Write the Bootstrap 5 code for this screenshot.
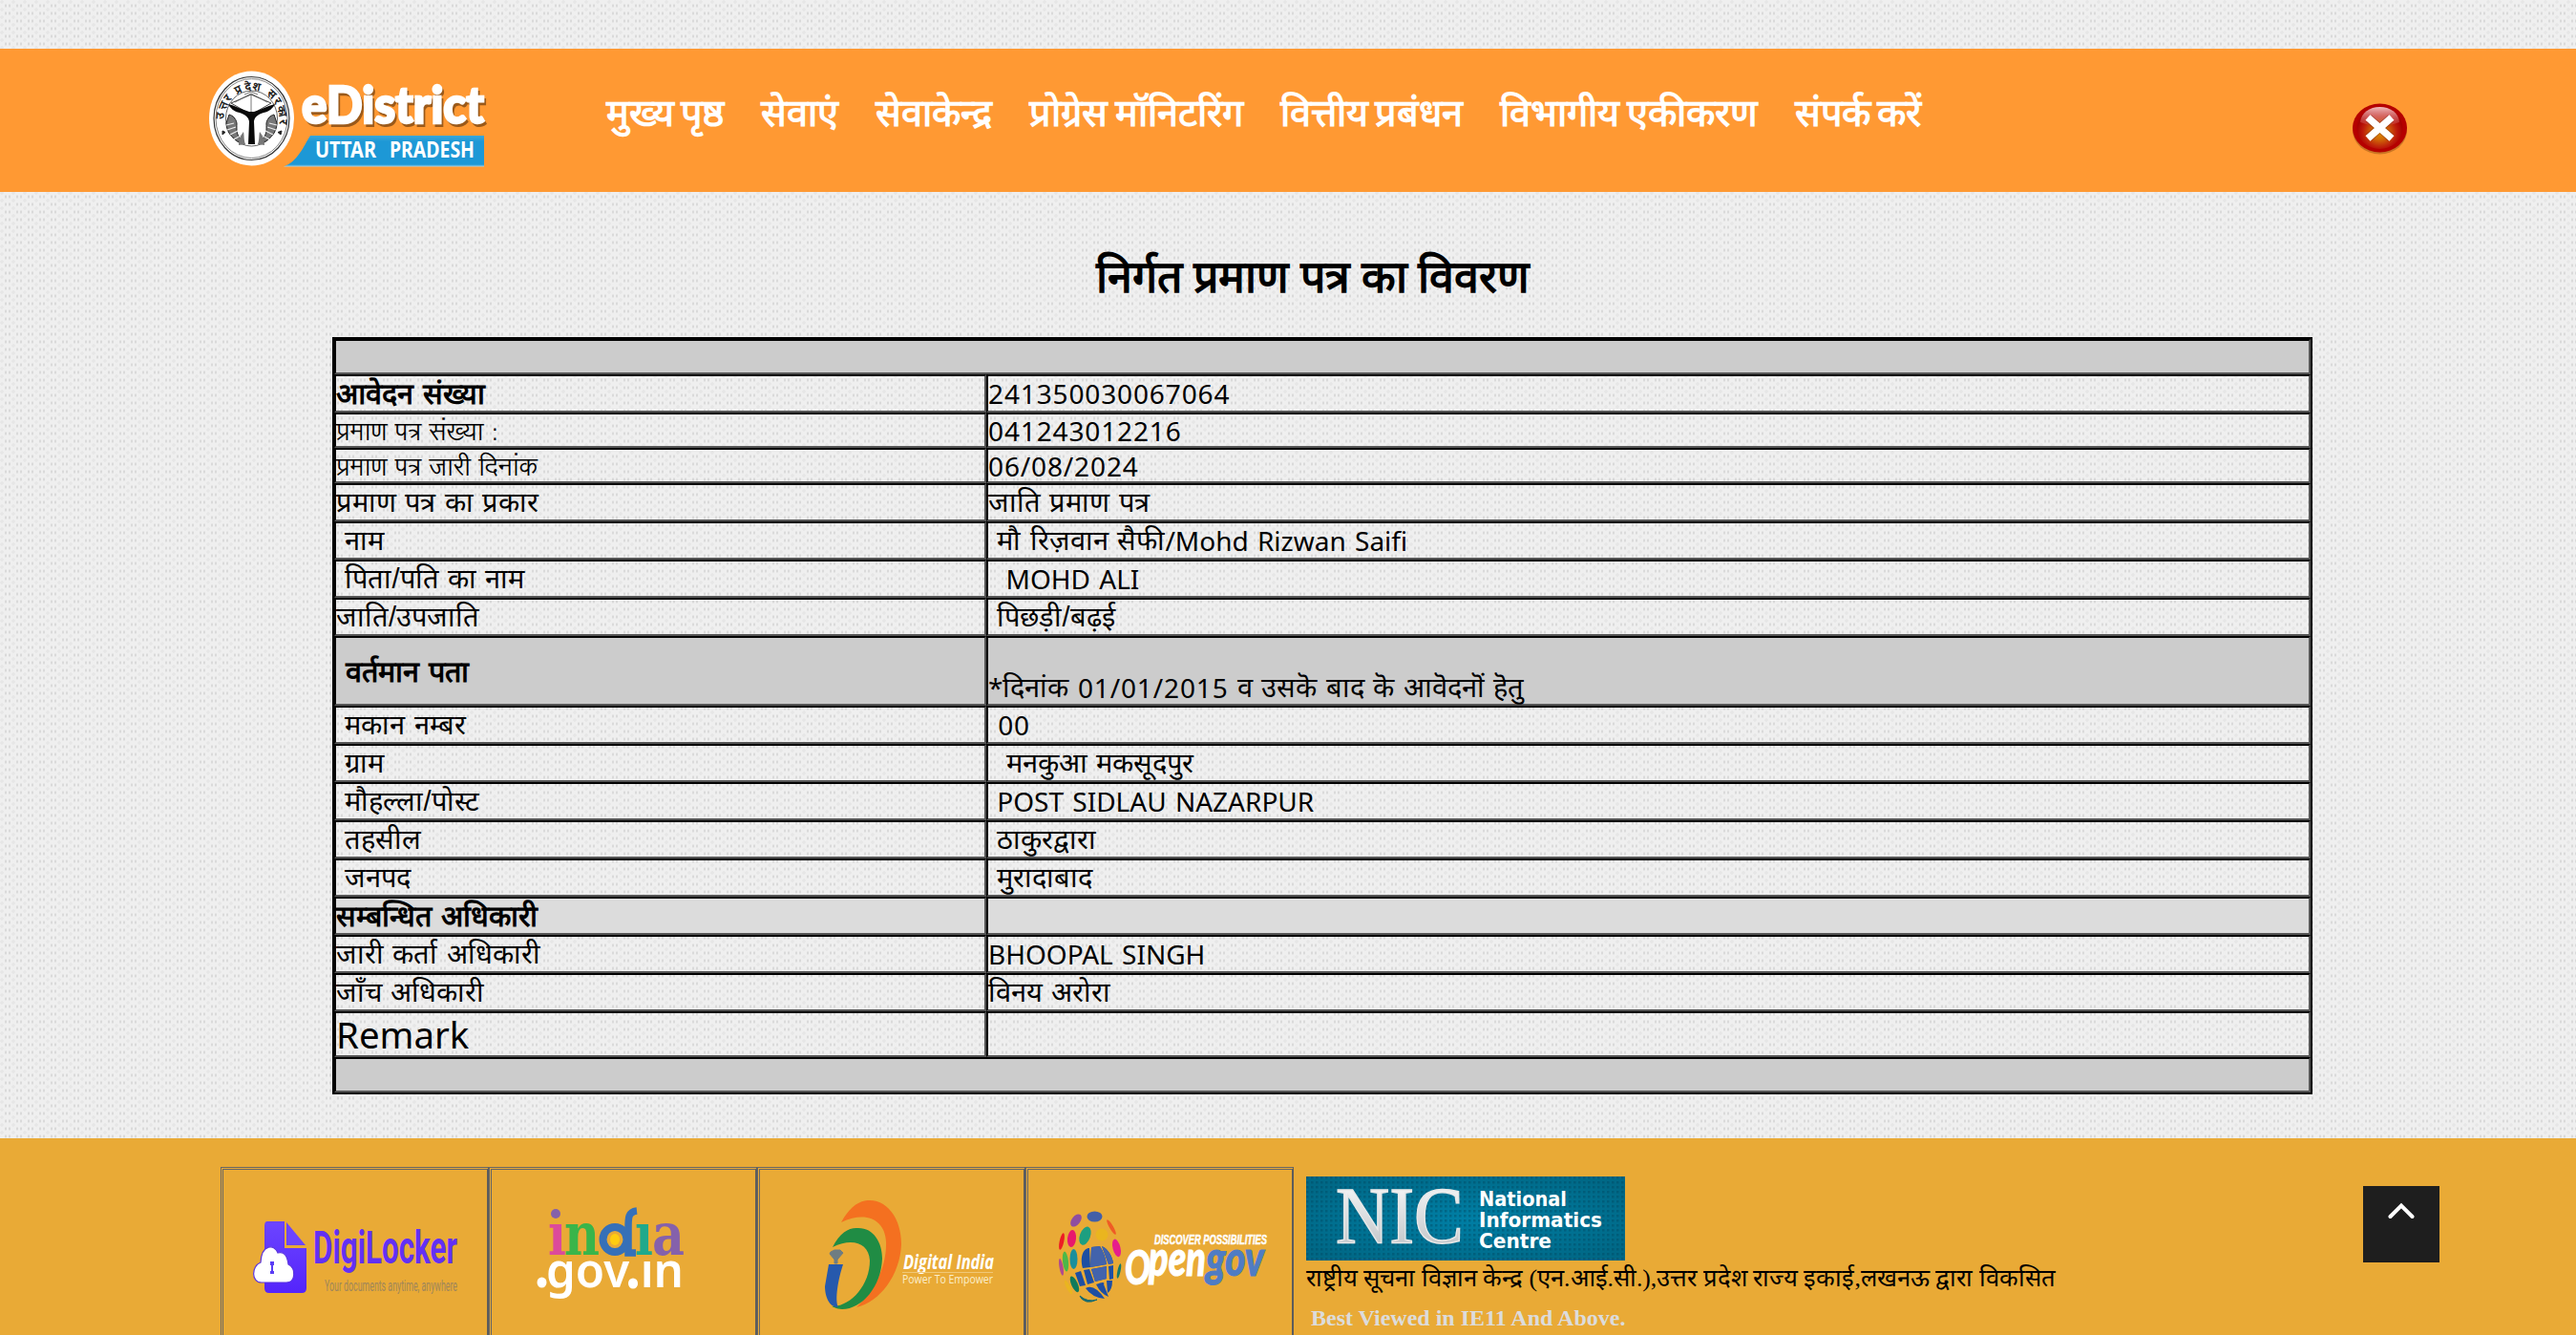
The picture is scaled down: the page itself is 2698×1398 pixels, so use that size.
<!DOCTYPE html>
<html lang="hi">
<head>
<meta charset="utf-8">
<meta name="viewport" content="width=device-width, initial-scale=1">
<title>eDistrict Uttar Pradesh</title>
<link href="https://cdn.jsdelivr.net/npm/bootstrap@5.3.0/dist/css/bootstrap.min.css" rel="stylesheet">
<style>
body{margin:0;height:1398px;overflow:hidden;color:#000;font-family:"Liberation Sans",sans-serif;background-color:#efefef;
 background-image:radial-gradient(ellipse 1.5px 2px,#dadada 60%,transparent),radial-gradient(ellipse 1.5px 2px,#dadada 60%,transparent),radial-gradient(ellipse 2px 2px,#e6e6e6 70%,transparent);
 background-size:12px 8px;background-position:0 2px,4px 2px,8px 6px}
svg{display:block}
.top-gap{height:51px}
.site-head{height:150px;background:#f93;padding-left:210px}
.site-logo{margin-top:18px;width:310px;height:110px}
.main-nav{margin-left:115px;margin-top:44px;gap:39px;font:700 39.6px/48px "Liberation Serif",serif;word-spacing:-2.5px}
.main-nav a{color:#fff;text-decoration:none;white-space:nowrap}
.close-ico{margin:52px 173px 0 auto;width:64px;height:64px}
.page-title{height:152px;padding:62px 0 0 52px;font:700 46.5px/56px "Liberation Serif",serif;margin:0}
.cert{width:2074px;margin-left:348px;table-layout:fixed;border-collapse:separate;border-spacing:0;border:2px solid #000;font-size:29px}
.cert td{border:2px solid #000;border-right-color:#555;border-bottom-color:#555;padding:0;vertical-align:middle;white-space:pre;line-height:1}
.cert td>div{display:flex;align-items:center;line-height:34px;word-spacing:1.400px}
.cert b{font-size:30.500px}
.cert .lat{font-family:"Noto Sans",sans-serif;font-size:28px;word-spacing:2px}
.cert .num{font-family:"Noto Sans",sans-serif;font-size:28px;letter-spacing:.87px;word-spacing:2px}
.h37{height:37px}.h40{height:40px}.h73{height:73px}.h48{height:48px}
.h37>td>div{height:33px}.h40>td>div{height:36px}.h73>td>div{height:69px}.h48>td>div{height:44px}
.bar{background:#ccc}.sub{background:#dcdcdc}
.cert td>.thin{font-family:"Lohit Devanagari","Noto Sans",sans-serif;font-size:26.300px;word-spacing:0;padding-top:4px}
.cert .remark{font:38.400px/44px "Noto Sans",sans-serif}
.site-foot{margin-top:46px;height:206px;background:#e9aa36;padding-left:231px}
.tile{width:281px;height:190px;margin-top:30px;border:3px double #666;border-right:2px solid #5c5c5c}
.nic{margin:40px 0 0 13px}
.dev{font:25.6px/38px "Liberation Serif",serif;height:34px;white-space:nowrap}
.best{font:700 24px/28px "Liberation Serif",serif;color:#dcdcdc;padding-left:5px;margin-top:12px}
.to-top{margin:50px 143px 0 auto;width:80px;height:80px;background:#1e1e1e}
</style>
</head>
<body>
<div class="top-gap"></div>
<header class="site-head d-flex align-items-start">
<svg class="site-logo" viewBox="210 69 310 110">
<defs>
<linearGradient id="rib" x1="0" y1="0" x2="0" y2="1"><stop offset="0" stop-color="#3ba6d8"/><stop offset=".2" stop-color="#1d98d6"/><stop offset=".93" stop-color="#1d98d6"/><stop offset="1" stop-color="#9fd3ea"/></linearGradient>
<path id="arc" d="M236.500 137A29 31 0 1 1 290.500 137"/>
</defs>
<ellipse cx="263.500" cy="124" rx="44.500" ry="49.500" fill="#fff"/>
<g fill="none" stroke="#333" stroke-width="1.200"><ellipse cx="263.500" cy="124" rx="39.500" ry="43.500"/><ellipse cx="263.500" cy="124" rx="37.500" ry="41.500" stroke="#666" stroke-width=".8"/><ellipse cx="263.500" cy="124" rx="27" ry="29" stroke="#555" stroke-width=".9"/></g>
<text font-weight="700" font-size="12" fill="#222"><textPath href="#arc" startOffset="12" textLength="98">उत्तर प्रदेश सरकार</textPath></text>
<path d="M242 108l21 12 21-12-21-9z" fill="#fff" stroke="#444" stroke-width="1"/><path d="M263 99v22M246 107l17-9 17 9M256 99l7-3 7 3" fill="none" stroke="#555" stroke-width=".8"/>
<path d="M239 109c8 2 15 6 22 8h5c7-2 14-6 22-8-2 4-6 8-12 9-6 2-9 4-10 9l1 24h-7l1-24c-1-5-5-7-10-9-6-1-10-5-12-9z" fill="#0a0a0a"/>
<path d="M240 120c4 1 7 4 8 9 0 7-1 13 6 18l2 4c-11-3-19-12-19-22zM287 120c-4 1-7 4-8 9 0 7 1 13-6 18l-2 4c11-3 19-12 19-22z" fill="#777" stroke="#222" stroke-width="1"/>
<path d="M237 131l8-2M238 136l9-3M241 141l8-4M245 146l7-4M290 131l-8-2M289 136l-9-3M286 141l-8-4M282 146l-7-4" stroke="#eee" stroke-width="1.200"/>
<path d="M250 152c0-7 2-10 5-14 1 4 0 7 2 13zM277 152c0-7-2-10-5-14-1 4 0 7-2 13z" fill="#777"/>
<path d="M233 137l3 1.500-3 2.500zM295 137l-4 1.500 3 2.500z" fill="#222" stroke="#222"/>
<g font-family="Lato,sans-serif" font-weight="900" font-size="53"><text x="318" y="131.500" fill="#7a4512" opacity=".75" stroke="#7a4512" stroke-width="2" textLength="191" lengthAdjust="spacingAndGlyphs">eDistrict</text><text x="316" y="129" fill="#fff" stroke="#fff" stroke-width="2.500" textLength="191" lengthAdjust="spacingAndGlyphs">eDistrict</text></g>
<path d="M325 142H507V174.500H297C312 169 318 153 325 142z" fill="url(#rib)"/>
<g font-family="Noto Sans,sans-serif" font-weight="700" font-size="23" fill="#fff"><text x="330" y="165" textLength="64" lengthAdjust="spacingAndGlyphs">UTTAR</text><text x="408" y="165" textLength="89" lengthAdjust="spacingAndGlyphs">PRADESH</text></g>
</svg>
<nav class="main-nav d-flex"><a href="#">मुख्य पृष्ठ</a><a href="#">सेवाएं</a><a href="#">सेवाकेन्द्र</a><a href="#">प्रोग्रेस मॉनिटरिंग</a><a href="#">वित्तीय प्रबंधन</a><a href="#">विभागीय एकीकरण</a><a href="#">संपर्क करें</a></nav>
<svg class="close-ico" viewBox="2461 103 64 64">
<defs><radialGradient id="red" cx=".5" cy=".6" r=".5"><stop offset="0" stop-color="#e09000"/><stop offset=".35" stop-color="#d06a08"/><stop offset=".75" stop-color="#bd1a0a"/><stop offset="1" stop-color="#a80000"/></radialGradient>
<linearGradient id="gloss" x1="0" y1="0" x2="0" y2="1"><stop offset="0" stop-color="#f6c8c8" stop-opacity=".95"/><stop offset="1" stop-color="#e08080" stop-opacity=".15"/></linearGradient></defs>
<ellipse cx="2492.500" cy="136.500" rx="28.500" ry="25" fill="#8a4a10" opacity=".45"/>
<ellipse cx="2492.500" cy="134" rx="28.500" ry="25.500" fill="#b50000"/><ellipse cx="2492.500" cy="134" rx="24" ry="22" fill="url(#red)"/>
<path d="M2472 128c1-10 10-16 20.500-16s20 6 20.500 16c-14 5-27 5-41 0z" fill="url(#gloss)"/>
<path d="M2481 124l23 20M2504 124l-23 20" stroke="#702010" stroke-width="9" opacity=".4"/><path d="M2480 123l25 22M2505 123l-25 22" stroke="#fff" stroke-width="7.500"/>
</svg>
</header>
<h1 class="page-title text-center">निर्गत प्रमाण पत्र का विवरण</h1>
<table class="cert">
<colgroup><col style="width:683px"><col></colgroup>
<tr class="h37 bar"><td colspan="2"><div></div></td></tr>
<tr class="h40"><td><div><b>आवेदन संख्या</b></div></td><td><div class="num">241350030067064</div></td></tr>
<tr class="h37"><td><div class="thin">प्रमाण पत्र संख्या :</div></td><td><div class="num">041243012216</div></td></tr>
<tr class="h37"><td><div class="thin">प्रमाण पत्र जारी दिनांक</div></td><td><div class="num">06/08/2024</div></td></tr>
<tr class="h40"><td><div>प्रमाण पत्र का प्रकार</div></td><td><div>जाति प्रमाण पत्र</div></td></tr>
<tr class="h40"><td><div>&nbsp;नाम</div></td><td><div>&nbsp;मौ रिज़वान सैफी<span class="lat">/Mohd Rizwan Saifi</span></div></td></tr>
<tr class="h40"><td><div>&nbsp;पिता/पति का नाम</div></td><td><div class="lat">&nbsp; MOHD ALI</div></td></tr>
<tr class="h40"><td><div>जाति/उपजाति</div></td><td><div>&nbsp;पिछड़ी/बढ़ई</div></td></tr>
<tr class="h73 bar"><td><div><b>&nbsp;वर्तमान पता</b></div></td><td><div class="align-items-end"><span class="lat">*</span>दिनांक <span class="num">01/01/2015</span> व उसकॆ बाद कॆ आवॆदनॊं हॆतु</div></td></tr>
<tr class="h40"><td><div>&nbsp;मकान नम्बर</div></td><td><div class="num">&nbsp;00</div></td></tr>
<tr class="h40"><td><div>&nbsp;ग्राम</div></td><td><div>&nbsp; मनकुआ मकसूदपुर</div></td></tr>
<tr class="h40"><td><div>&nbsp;मौहल्ला/पोस्ट</div></td><td><div class="lat">&nbsp;POST SIDLAU NAZARPUR</div></td></tr>
<tr class="h40"><td><div>&nbsp;तहसील</div></td><td><div>&nbsp;ठाकुरद्वारा</div></td></tr>
<tr class="h40"><td><div>&nbsp;जनपद</div></td><td><div>&nbsp;मुरादाबाद</div></td></tr>
<tr class="h40 sub"><td><div><b>सम्बन्धित अधिकारी</b></div></td><td><div></div></td></tr>
<tr class="h40"><td><div>जारी कर्ता अधिकारी</div></td><td><div class="lat">BHOOPAL SINGH</div></td></tr>
<tr class="h40"><td><div>जाँच अधिकारी</div></td><td><div>विनय अरोरा</div></td></tr>
<tr class="h48"><td><div class="remark">Remark</div></td><td><div></div></td></tr>
<tr class="h37 bar"><td colspan="2"><div></div></td></tr>
</table>
<footer class="site-foot d-flex align-items-start">
<div class="tile"><svg width="276" height="184" viewBox="234 1225 276 184">
<defs><linearGradient id="dl" x1="0" y1="1" x2="0" y2="0"><stop offset="0" stop-color="#5424fb"/><stop offset="1" stop-color="#6c45ff"/></linearGradient></defs>
<path d="M280 1279h18v28h23v42q0 5-5 5h-34q-5 0-5-5v-65q0-5 3-5z" fill="url(#dl)"/><path d="M300 1280l20 24h-20z" fill="#6c45ff"/>
<path d="M274 1343c-11 0-11-17-1-21 1-20 15-19 18-10 7-2 10 4 11 12 8 4 8 19-2 19z" fill="#fff" stroke="#5b35e0" stroke-width="1.200"/>
<path d="M283 1321h4v4h-1v6h1v3h-4v-3h1v-6h-1z" fill="#5b3df5"/>
<text x="328" y="1323" font-family="Roboto,sans-serif" font-weight="700" font-size="49" fill="#6230f5" textLength="151" lengthAdjust="spacingAndGlyphs">DigiLocker</text>
<text x="340" y="1352" font-family="Roboto,sans-serif" font-size="16" fill="#a0865a" textLength="139" lengthAdjust="spacingAndGlyphs">Your documents anytime, anywhere</text>
</svg></div>
<div class="tile"><svg width="276" height="184" viewBox="515 1225 276 184">
<g font-family="DejaVu Serif,serif" font-weight="700" font-size="61"><text y="1314" x="574" textLength="19" lengthAdjust="spacingAndGlyphs" fill="#dc4a9b">ı</text><text y="1314" x="591" textLength="37" lengthAdjust="spacingAndGlyphs" fill="#39b54a">n</text><text y="1314" x="665" textLength="19" lengthAdjust="spacingAndGlyphs" fill="#1fa98c">ı</text><text y="1314" x="683" textLength="34" lengthAdjust="spacingAndGlyphs" fill="#8561ab">a</text></g>
<ellipse cx="582" cy="1271" rx="5" ry="5" fill="#8561ab"/>
<path d="M667 1268c-9 1-9 7-9 18v26h8" fill="none" stroke="#3670b8" stroke-width="7.500"/><ellipse cx="644" cy="1298" rx="12.500" ry="13" fill="none" stroke="#3670b8" stroke-width="8"/><ellipse cx="644" cy="1298" rx="5" ry="6" fill="#fc1"/>
<g font-family="Noto Sans,sans-serif" font-weight="600" font-size="51"><text x="572" y="1348" fill="#fff" textLength="144" lengthAdjust="spacingAndGlyphs">gov.ın</text></g>
<ellipse cx="567.500" cy="1343" rx="5" ry="5.500" fill="#fff"/><ellipse cx="663" cy="1344" rx="5" ry="5.500" fill="#fff"/>
</svg></div>
<div class="tile"><svg width="276" height="184" viewBox="796 1225 276 184">
<path d="M881 1280C892 1260 903 1257 911 1257 930 1257 944 1277 944 1303 943 1335 921 1364 897 1369 917 1350 929 1325 928 1300 927 1278 908 1267 881 1280z" fill="#f47020"/>
<path d="M872 1306C880 1290 890 1285 899 1286 915 1286 924 1301 924 1318 923 1347 903 1371 882 1371 876 1371 868 1367 873 1368 892 1367 911 1345 911 1320 910 1301 892 1296 872 1306z" fill="#208c44"/>
<path d="M868 1324h15c-5 15-9 37-5 45-10 0-14-12-14-22z" fill="#2659ad"/><path d="M870 1311l4-2h6l3 3-6 7v4h-3v-4l-5-6z" fill="#6f7d82" stroke="#6f7d82"/>
<text x="946" y="1329" font-family="Open Sans,sans-serif" font-style="italic" font-weight="700" font-size="22" fill="#fff" textLength="95" lengthAdjust="spacingAndGlyphs">Digital India</text><path d="M945 1332.500h95" stroke="#f0c878"/>
<text x="945" y="1344" font-family="Open Sans,sans-serif" font-size="13.500" fill="#fbeecb" textLength="95" lengthAdjust="spacingAndGlyphs">Power To Empower</text>
</svg></div>
<div class="tile"><svg width="276" height="184" viewBox="1077 1225 276 184">
<g>
<ellipse cx="1146.500" cy="1274" rx="8" ry="5.500" fill="#435fa8"/><ellipse cx="1127" cy="1278" rx="4.500" ry="7.500" transform="rotate(38 1127 1278)" fill="#8f4ea0"/><ellipse cx="1164" cy="1285" rx="2" ry="9" transform="rotate(-30 1164 1285)" fill="#ef5b25"/>
<ellipse cx="1112" cy="1300" rx="2.300" ry="9" transform="rotate(12 1112 1300)" fill="#ed1c24"/><ellipse cx="1122.500" cy="1297" rx="4.500" ry="9" transform="rotate(6 1122 1297)" fill="#e8186c"/><ellipse cx="1136.500" cy="1294" rx="5.500" ry="10" transform="rotate(20 1136 1294)" fill="#1d9f80"/><ellipse cx="1154" cy="1293" rx="6.500" ry="6.500" fill="#eab51f"/><ellipse cx="1169.500" cy="1307" rx="4" ry="9.500" transform="rotate(-14 1169 1307)" fill="#e61e8c"/>
<ellipse cx="1111.500" cy="1327" rx="2" ry="9" transform="rotate(-10 1111 1327)" fill="#b04a90"/><ellipse cx="1116" cy="1321" rx="3" ry="10.500" transform="rotate(-6 1116 1321)" fill="#4cb848"/><ellipse cx="1124.500" cy="1318.500" rx="4" ry="10.500" fill="#1b8f9c"/><ellipse cx="1172" cy="1331" rx="1.600" ry="8" transform="rotate(12 1172 1331)" fill="#15796a"/>
<ellipse cx="1125.500" cy="1345" rx="3.300" ry="9" transform="rotate(-24 1125 1345)" fill="#0f7a5c"/><ellipse cx="1119" cy="1348" rx="2" ry="8" transform="rotate(-28 1119 1348)" fill="#eab51f"/><path d="M1131 1357q8 7 18 4-6 3-11 2-6-2-7-6z" fill="#156a70" stroke="#156a70"/>
</g>
<path d="M1141 1307c-7 0-10 10-7 21l8-1zM1143 1306l9-1c4 6 6 12 7 19l-17 3zM1154 1305c7 3 11 11 12 18l-5 1zM1126 1333l6-2 5 15-6 1zM1135 1330l6-1 5 14-7 2zM1143 1329l16-3v13l-12 3zM1161 1326l5-1v14l-4 1zM1137 1349q9-5 20 11-13-1-20-11zM1148 1345q10-4 8 0l5 13q-8-3-13-13zM1159 1341l6 0q0 10-5 13z" fill="#1e4fa3"/>
<path d="M1143 1306l9-1c4 6 6 12 7 19l-17 3zM1154 1305c7 3 11 11 12 18l-5 1zM1143 1329l16-3v13l-12 3z" fill="#4263ac"/>
<text x="1209" y="1303" font-family="Liberation Sans,sans-serif" font-style="italic" font-weight="700" font-size="15" fill="#fff" stroke="#fff" stroke-width=".5" textLength="118" lengthAdjust="spacingAndGlyphs">DISCOVER POSSIBILITIES</text>
<g font-family="Lato,sans-serif" font-style="italic" font-weight="900"><text x="1178" y="1345" font-size="50" fill="#fff" stroke="#fff" textLength="27" lengthAdjust="spacingAndGlyphs">O</text><text x="1203" y="1336" font-size="51" fill="#fff" stroke="#fff" textLength="60" lengthAdjust="spacingAndGlyphs">pen</text><text x="1263" y="1336" font-size="51" fill="#4f7cc4" stroke="#4f7cc4" textLength="61" lengthAdjust="spacingAndGlyphs">gov</text></g>
</svg></div>
<div class="nic"><svg width="334" height="88">
<defs><radialGradient id="nb" cx=".5" cy=".5" r=".6"><stop offset="0" stop-color="#007fa5"/><stop offset="1" stop-color="#006886"/></radialGradient><linearGradient id="sil" x1="0" y1="0" x2="0" y2="1"><stop offset="0" stop-color="#fff"/><stop offset="1" stop-color="#b8bcc0"/></linearGradient><pattern id="dots" width="5" height="5" patternUnits="userSpaceOnUse"><rect width="2.500" height="2.500" fill="#00475f" opacity=".4"/></pattern></defs>
<rect width="334" height="88" fill="url(#nb)"/><rect width="334" height="88" fill="url(#dots)"/>
<text x="31" y="70" font-family="Liberation Serif,serif" font-size="84" fill="url(#sil)" stroke="#e8e8e8" stroke-width="1.500" textLength="134" lengthAdjust="spacingAndGlyphs">NIC</text>
<g font-family="DejaVu Sans,sans-serif" font-weight="700" font-size="22" fill="#fff"><text x="181" y="31" textLength="92" lengthAdjust="spacingAndGlyphs">National</text><text x="181" y="53" textLength="129" lengthAdjust="spacingAndGlyphs">Informatics</text><text x="181" y="75" textLength="76" lengthAdjust="spacingAndGlyphs">Centre</text></g></svg>
<div class="dev">राष्ट्रीय सूचना विज्ञान केन्द्र (एन.आई.सी.),उत्तर प्रदेश राज्य इकाई,लखनऊ द्वारा विकसित</div>
<div class="best">Best Viewed in IE11 And Above.</div></div>
<a class="to-top" href="#"><svg width="80" height="80"><path d="M28.500 32L40 20.500 51.500 32" fill="none" stroke="#fff" stroke-width="4" stroke-linecap="round"/></svg></a>
</footer>
<script src="https://cdn.jsdelivr.net/npm/bootstrap@5.3.0/dist/js/bootstrap.bundle.min.js"></script>
</body>
</html>
